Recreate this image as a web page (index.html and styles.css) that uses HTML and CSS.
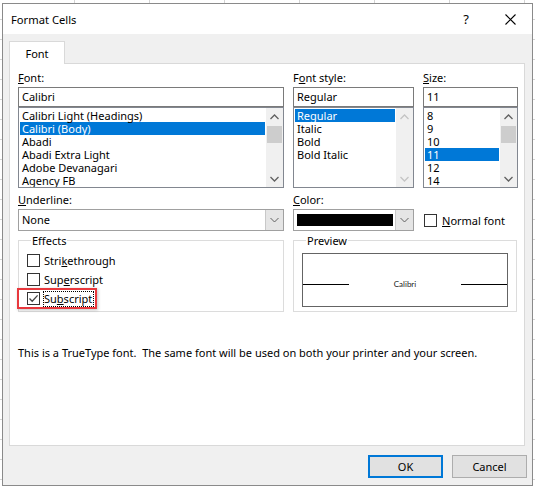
FILE: index.html
```html
<!DOCTYPE html>
<html>
<head>
<meta charset="utf-8">
<link rel="stylesheet" href="styles.css">
</head>
<body>
<div class="dialog">
  <div class="titlebar">
    <span class="title">Format Cells</span>
    <span class="help">?</span>
    <svg class="close" width="11" height="11" viewBox="0 0 11 11"><path d="M0.5 0.5 L10.5 10.5 M10.5 0.5 L0.5 10.5" stroke="#000" stroke-width="1.1" fill="none"/></svg>
  </div>
  <div class="client">
    <div class="tabs"><div class="tab">Font</div></div>
    <div class="panel">
      <div class="top-grid">
        <div class="col">
          <div class="lbl"><u>F</u>ont:</div>
          <div class="input">Calibri</div>
          <div class="list">
            <div class="items">
              <div class="item">Calibri Light (Headings)</div>
              <div class="item sel">Calibri (Body)</div>
              <div class="item">Abadi</div>
              <div class="item">Abadi Extra Light</div>
              <div class="item">Adobe Devanagari</div>
              <div class="item">Agency FB</div>
            </div>
            <div class="sbar">
              <div class="arrow"><svg width="9" height="6" viewBox="0 0 9 6"><path d="M0.5 5 L4.5 1 L8.5 5" stroke="#606060" stroke-width="1.3" fill="none"/></svg></div>
              <div class="track"><div class="thumb"></div></div>
              <div class="arrow"><svg width="9" height="6" viewBox="0 0 9 6"><path d="M0.5 1 L4.5 5 L8.5 1" stroke="#606060" stroke-width="1.3" fill="none"/></svg></div>
            </div>
          </div>
        </div>
        <div class="col">
          <div class="lbl">F<u>o</u>nt style:</div>
          <div class="input">Regular</div>
          <div class="list">
            <div class="items">
              <div class="item sel">Regular</div>
              <div class="item">Italic</div>
              <div class="item">Bold</div>
              <div class="item">Bold Italic</div>
            </div>
            <div class="sbar">
              <div class="arrow"><svg width="9" height="6" viewBox="0 0 9 6"><path d="M0.5 5 L4.5 1 L8.5 5" stroke="#c4c4c4" stroke-width="1.3" fill="none"/></svg></div>
              <div class="track"></div>
              <div class="arrow"><svg width="9" height="6" viewBox="0 0 9 6"><path d="M0.5 1 L4.5 5 L8.5 1" stroke="#c4c4c4" stroke-width="1.3" fill="none"/></svg></div>
            </div>
          </div>
        </div>
        <div class="col size-col">
          <div class="lbl"><u>S</u>ize:</div>
          <div class="input">11</div>
          <div class="list">
            <div class="items">
              <div class="item">8</div>
              <div class="item">9</div>
              <div class="item">10</div>
              <div class="item sel">11</div>
              <div class="item">12</div>
              <div class="item">14</div>
            </div>
            <div class="sbar">
              <div class="arrow"><svg width="9" height="6" viewBox="0 0 9 6"><path d="M0.5 5 L4.5 1 L8.5 5" stroke="#606060" stroke-width="1.3" fill="none"/></svg></div>
              <div class="track"><div class="thumb"></div></div>
              <div class="arrow"><svg width="9" height="6" viewBox="0 0 9 6"><path d="M0.5 1 L4.5 5 L8.5 1" stroke="#606060" stroke-width="1.3" fill="none"/></svg></div>
            </div>
          </div>
        </div>
      </div>

      <div class="mid-grid">
        <div class="col">
          <div class="lbl"><u>U</u>nderline:</div>
          <div class="select">
            <div class="sel-value">None</div>
            <div class="drop"><svg width="9" height="6" viewBox="0 0 9 6"><path d="M0.5 1 L4.5 5 L8.5 1" stroke="#606060" stroke-width="1" fill="none"/></svg></div>
          </div>
        </div>
        <div class="col">
          <div class="lbl"><u>C</u>olor:</div>
          <div class="select color-select">
            <div class="sel-value"><div class="swatch"></div></div>
            <div class="drop"><svg width="9" height="6" viewBox="0 0 9 6"><path d="M0.5 1 L4.5 5 L8.5 1" stroke="#606060" stroke-width="1" fill="none"/></svg></div>
          </div>
        </div>
        <div class="normal">
          <span class="cb"></span><span><u>N</u>ormal font</span>
        </div>
      </div>

      <div class="groups">
        <fieldset class="group effects">
          <legend>Effects</legend>
          <div class="cbrow"><span class="cb"></span><span>Stri<u>k</u>ethrough</span></div>
          <div class="cbrow"><span class="cb"></span><span>Sup<u>e</u>rscript</span></div>
          <div class="cbrow marked">
            <span class="cb checked"><svg width="11" height="11" viewBox="0 0 11 11"><path d="M1.5 5.5 L4.2 8.3 L9.6 2.4" stroke="#444" stroke-width="1.3" fill="none"/></svg></span><span class="focus">Su<u>b</u>script</span>
            <span class="highlight"></span>
          </div>
        </fieldset>
        <fieldset class="group preview">
          <legend>Preview</legend>
          <div class="pv-box">
            <div class="pv-row">
              <span class="pv-line"></span>
              <span class="pv-text">Calibri</span>
              <span class="pv-line"></span>
            </div>
          </div>
        </fieldset>
      </div>

      <div class="note">This is a TrueType font.&nbsp; The same font will be used on both your printer and your screen.</div>
    </div>
    <div class="buttons">
      <div class="btn default">OK</div>
      <div class="btn">Cancel</div>
    </div>
  </div>
</div>
</body>
</html>
```

FILE: styles.css
```css
* { box-sizing: border-box; }
html, body { margin: 0; padding: 0; }
body {
  width: 535px;
  height: 486px;
  overflow: hidden;
  background-color: #fff;
  background-image:
    repeating-linear-gradient(to right, transparent 0, transparent 74px, #d4d4d4 74px, #d4d4d4 75px),
    repeating-linear-gradient(to bottom, transparent 0, transparent 19px, #d4d4d4 19px, #d4d4d4 20px);
  font-family: "Noto Sans", "Open Sans", sans-serif;
  font-size: 11px;
  color: #000;
}
u { text-decoration: underline; text-underline-offset: 1px; }

.dialog {
  margin: 3px 0 0 2px;
  width: 531px;
  height: 483px;
  border: 1px solid #8a8a8a;
  background: #f0f0f0;
  display: flex;
  flex-direction: column;
}
.titlebar {
  height: 30px;
  background: #fff;
  display: flex;
  align-items: center;
  padding-left: 8px;
  flex: 0 0 auto;
}
.title { flex: 1; font-size: 11.2px; }
.help { font-size: 13px; margin-right: 36px; }
.close { margin-right: 16px; }

.client {
  flex: 1;
  padding: 7px 0 0 6px;
  display: flex;
  flex-direction: column;
}
.tabs { display: flex; position: relative; z-index: 1; margin-bottom: -1px; }
.tab {
  width: 56px;
  height: 23px;
  border: 1px solid #d9d9d9;
  border-bottom: none;
  background: #fff;
  display: flex;
  align-items: center;
  justify-content: center;
  padding-top: 1px;
}
.panel {
  width: 516px;
  height: 383px;
  border: 1px solid #d9d9d9;
  background: #fff;
  padding: 6px 0 0 8px;
}

.lbl { height: 15px; line-height: 15px; margin-bottom: 2px; }

.top-grid {
  display: grid;
  grid-template-columns: 266px 121px 95px;
  column-gap: 9px;
}
.input {
  height: 20px;
  border: 1px solid #7a7a7a;
  padding-left: 3px;
  line-height: 18px;
  background: #fff;
}
.list {
  height: 81px;
  border: 1px solid #828790;
  display: flex;
  background: #fff;
}
.items { flex: 1; padding: 1px 1px 0 1px; overflow: hidden; }
.item { height: 13px; line-height: 13px; padding-left: 2px; white-space: nowrap; }
.item.sel { background: #0078d7; color: #fff; }
.sbar {
  width: 17px;
  background: #f0f0f0;
  display: flex;
  flex-direction: column;
}
.arrow { height: 17px; display: flex; align-items: center; justify-content: center; }
.track { flex: 1; }
.thumb { height: 17px; margin: 1px 1px 0 1px; background: #cdcdcd; }

.mid-grid {
  margin-top: 4px;
  display: grid;
  grid-template-columns: 266px 121px 95px;
  column-gap: 9px;
}
.select {
  height: 22px;
  border: 1px solid #a0a0a0;
  display: flex;
  background: #fff;
}
.sel-value { flex: 1; padding-left: 3px; line-height: 20px; }
.drop {
  width: 18px;
  background: #e5e5e5;
  border-left: 1px solid #c8c8c8;
  display: flex;
  align-items: center;
  justify-content: center;
}
.color-select .sel-value { padding: 4px 2px 4px 3px; }
.swatch { height: 12px; background: #000; }
.normal {
  display: flex;
  align-items: center;
  align-self: end;
  height: 22px;
  gap: 5px;
  padding-left: 1px;
}
.cb {
  width: 13px;
  height: 13px;
  border: 1px solid #333;
  background: #fff;
  display: inline-flex;
  align-items: center;
  justify-content: center;
  flex: 0 0 auto;
}

.groups {
  margin-top: 2px;
  display: grid;
  grid-template-columns: 266px 224px;
  column-gap: 9px;
}
.group {
  margin: 0;
  padding: 0;
  border: 1px solid #dcdcdc;
  min-width: 0;
  height: 79px;
}
.group legend {
  padding: 0 1px;
  margin-left: 4px;
  line-height: 15px;
  height: 15px;
}
.effects { padding: 3px 0 0 8px; }
.cbrow {
  height: 19px;
  display: flex;
  align-items: center;
  gap: 4px;
  position: relative;
}
.focus { outline: 1px dotted #000; outline-offset: 0; line-height: 14px; padding: 0 1px 0 0; }
.highlight {
  position: absolute;
  left: -10px;
  top: -1px;
  width: 80px;
  height: 21px;
  border: 2px solid #e8383d;
  box-shadow: 1px 1px 3px rgba(0,0,0,0.25);
  pointer-events: none;
}

.preview { padding: 5px 8px 0 8px; }
.pv-box {
  height: 54px;
  border: 1px solid #646464;
  background: #fff;
}
.pv-row {
  margin-top: 26px;
  height: 8px;
  display: flex;
  align-items: center;
}
.pv-line { width: 46px; height: 1px; background: #000; }
.pv-text {
  flex: 1;
  text-align: center;
  font-family: "Lato", "Liberation Sans", sans-serif;
  font-size: 8px;
  line-height: 8px;
  color: #222;
}

.note { margin-top: 33px; line-height: 15px; white-space: nowrap; }

.buttons {
  display: flex;
  justify-content: flex-end;
  gap: 9px;
  padding: 9px 5px 0 0;
}
.btn {
  width: 75px;
  height: 23px;
  border: 1px solid #adadad;
  background: #e1e1e1;
  display: flex;
  align-items: center;
  justify-content: center;
}
.btn.default { border: 2px solid #0078d7; }
```
